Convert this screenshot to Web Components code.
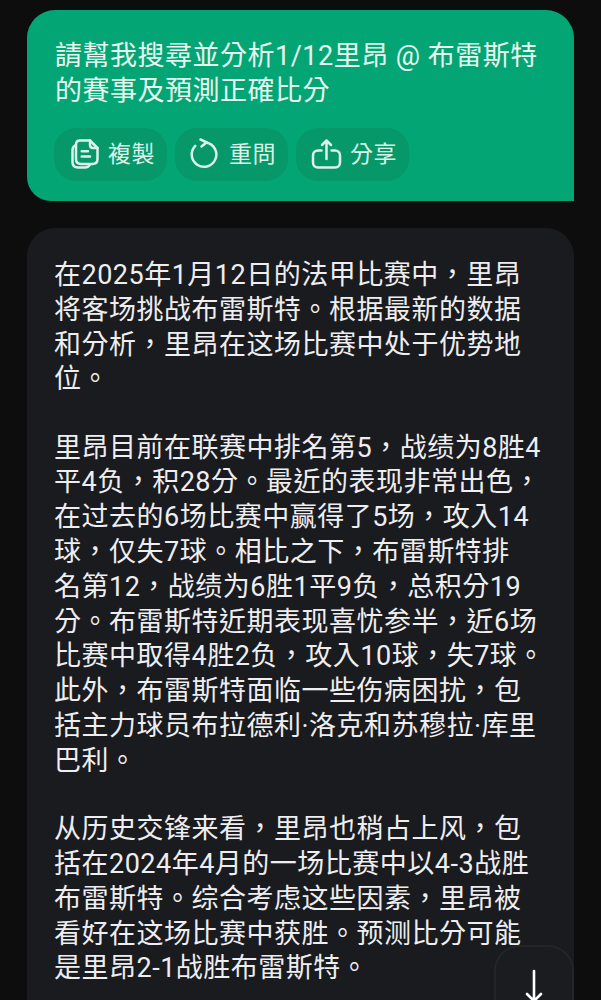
<!DOCTYPE html>
<html lang="zh-Hant">
<head>
<meta charset="utf-8">
<style>
  html, body { margin: 0; padding: 0; height: 1000px; overflow: hidden; background: #0d0d0e; }
  body { font-family: Roboto, "Noto Sans CJK TC", sans-serif; }
  chat-thread { height: 1000px; }
</style>
</head>
<body>
<chat-thread>
  <user-bubble>
    請幫我搜尋並分析1/12里昂 @ 布雷斯特的賽事及預測正確比分
    <action-chip slot="actions" icon="copy">複製</action-chip>
    <action-chip slot="actions" icon="retry">重問</action-chip>
    <action-chip slot="actions" icon="share">分享</action-chip>
  </user-bubble>
  <answer-bubble>
    <p>在2025年1月12日的法甲比赛中，里昂将客场挑战布雷斯特。根据最新的数据和分析，里昂在这场比赛中处于优势地位。</p>
    <p>里昂目前在联赛中排名第5，战绩为8胜4平4负，积28分。最近的表现非常出色，在过去的6场比赛中赢得了5场，攻入14球，仅失7球。相比之下，布雷斯特排<br>名第12，战绩为6胜1平9负，总积分19分。布雷斯特近期表现喜忧参半，近6场比赛中取得4胜2负，攻入10球，失7球。此外，布雷斯特面临一些伤病困扰，包括主力球员布拉德利·洛克和苏穆拉·库里巴利。</p>
    <p>从历史交锋来看，里昂也稍占上风，包括在2024年4月的一场比赛中以4-3战胜布雷斯特。综合考虑这些因素，里昂被看好在这场比赛中获胜。预测比分可能是里昂2-1战胜布雷斯特。</p>
  </answer-bubble>
  <scroll-button></scroll-button>
</chat-thread>
<script>
  class ChatThread extends HTMLElement {
    constructor() {
      super();
      this.attachShadow({ mode: 'open' });
      this.shadowRoot.innerHTML = `
        <style>
          :host {
            display: flex;
            flex-direction: column;
            gap: 27px;
            padding: 10px 27px 0;
            position: relative;
            overflow: hidden;
            box-sizing: border-box;
          }
        </style>
        <slot></slot>
      `;
    }
  }

  class UserBubble extends HTMLElement {
    constructor() {
      super();
      this.attachShadow({ mode: 'open' });
      this.shadowRoot.innerHTML = `
        <style>
          :host {
            display: block;
            background: #04a574;
            border-radius: 28px 28px 0 24px;
            padding: 29px 27px 20px 28px;
            color: #e6f7f0;
            font-size: 27px;
            line-height: 35px;
            letter-spacing: 0.5px;
          }
          .actions { display: flex; gap: 8px; margin-top: 19px; margin-left: -1px; }
        </style>
        <slot></slot>
        <div class="actions"><slot name="actions"></slot></div>
      `;
    }
  }

  const ICONS = {
    copy: `<path d="M8 6.500C6 7.500 5.500 9.500 5.500 11.500V23c0 3.500 2 5.500 5.500 5.500h7c2.500 0 4-1 5-3"/>
           <path d="M13 1.500h10L30.500 9v11c0 3.200-2 5-5 5H14c-3.200 0-5-1.800-5-5V5.500c0-2.500 1.500-4 4-4z"/>
           <path d="M23 1.500V6c0 2 1 3 3 3h4.500"/>
           <path d="M14.700 12.200H21M14.700 17.500H23"/>`,
    retry: `<path d="M7.300 6.800A12.300 12.300 0 1 0 18.300 3.400"/><path d="M12.500 0.500L18.800 3.300L13.500 7.500"/>`,
    share: `<path d="M12.500 11.500H9c-3 0-5 2-5 5v7c0 3 2 5 5 5h17c3 0 5-2 5-5v-7c0-3-2-5-5-5h-3.500"/>
            <path d="M17.500 20V1.500M13 6l4.500-4.500L22 6"/>`
  };

  class ActionChip extends HTMLElement {
    constructor() {
      super();
      this.attachShadow({ mode: 'open' });
      const icon = ICONS[this.getAttribute('icon')] || '';
      this.shadowRoot.innerHTML = `
        <style>
          :host {
            display: flex;
            align-items: center;
            gap: 9px;
            height: 53px;
            box-sizing: border-box;
            padding: 0 12px 0 13px;
            border-radius: 22px;
            background: #069869;
            color: #dcf2ea;
            font-size: 23px;
            line-height: 1;
          }
          svg {
            width: 32px; height: 32px;
            overflow: visible;
            fill: none; stroke: currentColor; stroke-width: 2.5;
            stroke-linecap: round; stroke-linejoin: round;
          }
        </style>
        <svg viewBox="0 0 32 32">${icon}</svg>
        <slot></slot>
      `;
    }
  }

  class AnswerBubble extends HTMLElement {
    constructor() {
      super();
      this.attachShadow({ mode: 'open' });
      this.shadowRoot.innerHTML = `
        <style>
          :host {
            display: block;
            flex: 1;
            background: #1a1b1f;
            border-radius: 28px 28px 0 0;
            padding: 30px 28px 0 27px;
            color: #eeeef0;
            font-size: 27px;
            line-height: 34.8px;
            letter-spacing: 0.5px;
          }
          ::slotted(p) { margin: 0 0 33.5px; }
        </style>
        <slot></slot>
      `;
    }
  }

  class ScrollButton extends HTMLElement {
    constructor() {
      super();
      this.attachShadow({ mode: 'open' });
      this.shadowRoot.innerHTML = `
        <style>
          :host {
            position: absolute;
            left: 494px;
            top: 945px;
            width: 80px;
            height: 80px;
            box-sizing: border-box;
            border: 2px solid #242529;
            border-radius: 26px;
            background: #1b1c20;
            color: #fff;
          }
          svg {
            display: block;
            width: 24px; height: 40px;
            margin: 22px 0 0 26px;
            fill: none; stroke: currentColor; stroke-width: 2.6;
            stroke-linecap: round; stroke-linejoin: round;
          }
        </style>
        <svg viewBox="0 0 24 40"><path d="M12 2v30M5 25l7 7 7-7"/></svg>
      `;
    }
  }

  customElements.define('chat-thread', ChatThread);
  customElements.define('user-bubble', UserBubble);
  customElements.define('action-chip', ActionChip);
  customElements.define('answer-bubble', AnswerBubble);
  customElements.define('scroll-button', ScrollButton);
</script>
</body>
</html>
